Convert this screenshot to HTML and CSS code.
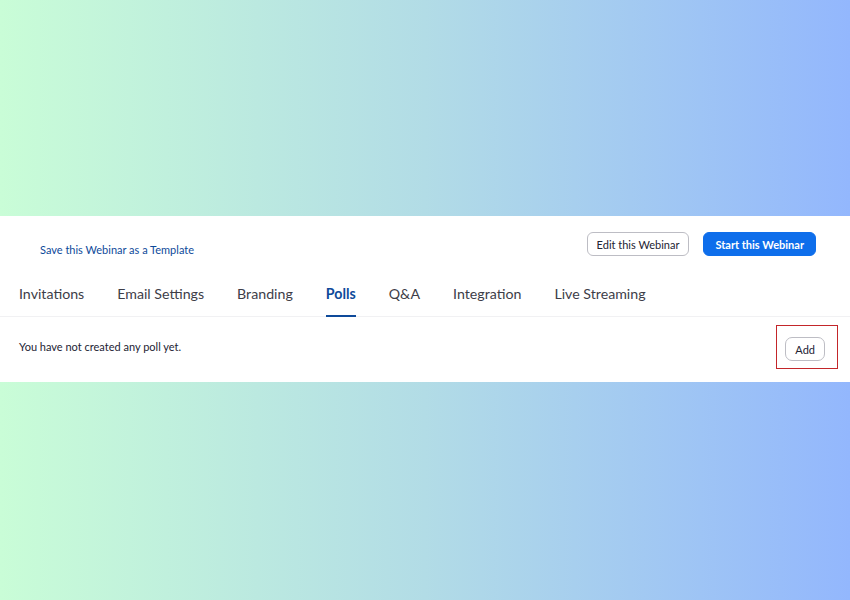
FILE: index.html
```html
<!DOCTYPE html>
<html lang="en">
<head>
  <meta charset="UTF-8">
  <title>Webinar - Polls</title>
  <link rel="stylesheet" href="styles.css">
</head>
<body>
  <div class="bg top"></div>

  <div class="panel">
    <div class="head">
      <a class="template-link" href="#">Save this Webinar as a Template</a>
      <div class="actions">
        <button class="btn">Edit this Webinar</button>
        <button class="btn primary">Start this Webinar</button>
      </div>
    </div>

    <div class="tabs">
      <span class="tab">Invitations</span>
      <span class="tab">Email Settings</span>
      <span class="tab">Branding</span>
      <span class="tab active">Polls</span>
      <span class="tab">Q&amp;A</span>
      <span class="tab">Integration</span>
      <span class="tab">Live Streaming</span>
    </div>

    <div class="polls">
      <p>You have not created any poll yet.</p>
      <div class="highlight">
        <button class="btn small">Add</button>
      </div>
    </div>
  </div>

  <div class="bg bottom"></div>
</body>
</html>
```

FILE: styles.css
```css
body { margin: 0; font-family: Lato, "Open Sans", sans-serif; background: linear-gradient(90deg, #c9fdd7, #b2dce6 50%, #93b7fd); width: 850px; height: 600px; overflow: hidden; }
.bg.top { height: 216px; }
.bg.bottom { height: 218px; }

.panel { background: #fff; height: 166px; }

.head { display: flex; justify-content: space-between; align-items: center; padding: 16px 34px 0 40px; height: 24px; }
.template-link { color: #0e4a9a; font-size: 11px; text-decoration: none; margin-top: 10px; }
.actions { display: flex; gap: 14px; }

.btn { font-family: Lato, sans-serif; font-size: 11px; color: #232333; background: #fff; border: 1px solid #bdbdc4; border-radius: 6px; height: 24px; padding: 0 9px; }
.btn.primary { background: #0e6eeb; border-color: #0e6eeb; color: #fff; font-weight: bold; padding: 0 11px; }
.btn.small { height: 24px; padding: 0 9px; border-radius: 7px; }

.tabs { display: flex; gap: 33px; padding: 0 19px; margin-top: 20px; border-bottom: 1px solid #f1f1f3; }
.tab { font-size: 14.2px; line-height: 17px; color: #3d3d48; padding: 9px 0 13px; border-bottom: 2px solid transparent; margin-bottom: -1px; }
.tab.active { color: #0e4a9a; font-weight: bold; border-bottom-color: #0e4a9a; }

.polls { display: flex; justify-content: space-between; align-items: center; padding: 8px 12px 0 19px; }
.polls p { margin: 0 0 2px; font-size: 11px; color: #232333; }
.highlight { border: 1px solid #c3262a; padding: 11px 12px 7px 8px; }
```
